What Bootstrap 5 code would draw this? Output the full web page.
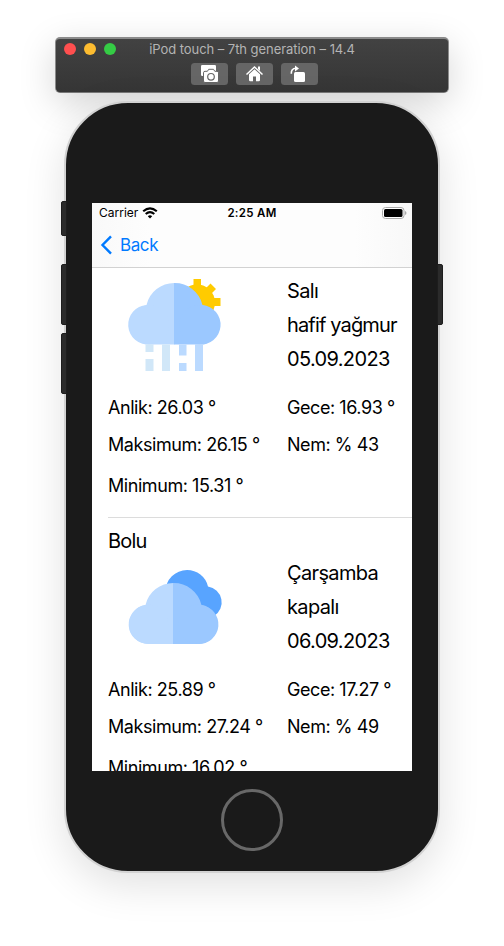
<!DOCTYPE html>
<html lang="tr">
<head>
<meta charset="utf-8">
<meta name="viewport" content="width=device-width, initial-scale=1">
<title>iPod touch – Simulator</title>
<link href="https://cdn.jsdelivr.net/npm/bootstrap@5.3.0/dist/css/bootstrap.min.css" rel="stylesheet">
<style>
body{font-family:Inter,"Liberation Sans",sans-serif;background:#fff;color:#000;height:946px;overflow:hidden}
.sim-bar{width:394px;height:56px;margin-top:37px;border:1px solid #8b8b8b;border-top-width:2px;border-bottom-color:#777;border-radius:5px;background:linear-gradient(#424242,#353535);box-shadow:0 10px 36px rgba(0,0,0,.17)}
.sim-title{font-size:13px;line-height:20px;color:#b4b4b4;text-align:center;letter-spacing:-.05px}
.lights{left:8px;top:4px}
.light{width:12px;height:12px;border-radius:50%}
.light-close{background:#ff4f4f}.light-min{background:#fdbc30}.light-max{background:#35cc45}
.tools{padding:4px 0 0 5px}
.tool{width:37px;height:22px;border-radius:3.5px;background:#666;border:0;padding:0;display:block}
.device{position:relative;width:376px;height:772px;margin-top:8px;padding:100px 26px 0;border:2px solid #d2d2d2;border-radius:64px;background:#1a1a1a;box-shadow:0 12px 42px rgba(0,0,0,.12)}
.side{position:absolute;width:6px;background:#2b2b2b;border:1px solid #1d1d1d;border-radius:2px 0 0 2px;left:-5px}
.side.right{left:auto;right:-5px;border-radius:0 2px 2px 0}
.s1{top:98px;height:35px}.s2{top:161px;height:61px}.s3{top:230px;height:61px}
.screen{width:320px;height:568px;background:#fff;overflow:hidden}
.top{height:65px;background:linear-gradient(90deg,#f9f9f9,#fdfdfd 18%,#fdfdfd 82%,#f8f8f8);border-bottom:1px solid #d2d2d2}
.status{position:relative;height:20px;font-size:12px;line-height:20px;padding:0 5px 0 7px}
.clock{position:absolute;left:0;right:0;text-align:center;font-size:11.5px;font-weight:600;letter-spacing:.3px}
.back{height:44px;padding-left:8px;color:#007aff;font-size:17px;letter-spacing:-.4px}
.back-label{padding:2px 0 0 2px}
.cell{padding-left:16px}
.cell + .cell .inner{border-top:1px solid #dcdcdc}
.city{font-size:20px;line-height:30px;padding-top:8px;letter-spacing:-.8px}
.first{padding-top:6px}
.art{width:179px}
.art svg{display:block;margin-left:12px}
.day{font-size:20px;line-height:34px;letter-spacing:-.65px;white-space:nowrap}
.day .wide{letter-spacing:-.85px}
.facts{padding-top:14px;font-size:18px;letter-spacing:-.44px;white-space:nowrap}
.facts .l{width:179px}
.r1{line-height:36px}.r2{line-height:38px}.r3{line-height:43px;padding-bottom:10px}
.home-btn{width:62px;height:62px;border:3px solid #686868;border-radius:50%;margin:18px auto 0}
</style>
<script src="https://cdn.jsdelivr.net/npm/bootstrap@5.3.0/dist/js/bootstrap.bundle.min.js"></script>
</head>
<body class="d-flex flex-column align-items-center">
<header class="sim-bar position-relative flex-shrink-0">
  <div class="lights position-absolute d-flex gap-2"><span class="light light-close"></span><span class="light light-min"></span><span class="light light-max"></span></div>
  <div class="sim-title">iPod touch – 7th generation – 14.4</div>
  <div class="d-flex justify-content-center gap-2 tools">
    <button class="tool" aria-label="Screenshot"><svg class="d-block" width="37" height="22" viewBox="0 0 37 22"><rect x="10" y="2" width="15" height="11" rx="1.3" fill="#fff"/><path d="M14 8.300h2.400l1.300-2h4.800l1.300 2H26q1.500 0 1.500 1.500V18q0 1.500-1.500 1.500H14q-1.500 0-1.500-1.500V9.800q0-1.500 1.500-1.500z" fill="#fff" stroke="#666" stroke-width="1"/><circle cx="20" cy="13.800" r="3.300" fill="#fff" stroke="#666" stroke-width="1.200"/></svg></button>
    <button class="tool" aria-label="Home"><svg class="d-block" width="37" height="22" viewBox="0 0 37 22"><path d="M10.500 11.500 18.500 4l8 7.500" fill="none" stroke="#fff" stroke-width="1.500"/><path d="M22 3.500h2V8l-2-2z" fill="#fff"/><path d="M13 11.300 18.500 6.200l5.500 5.100V17q0 1.300-1.300 1.300H20V13.500h-3v4.800h-2.700Q13 18.300 13 17z" fill="#fff"/></svg></button>
    <button class="tool" aria-label="Rotate"><svg class="d-block" width="37" height="22" viewBox="0 0 37 22"><rect x="13" y="9" width="11" height="10" rx="1.500" fill="#fff"/><path d="M10.300 10.800Q10 5.500 15 5.300" fill="none" stroke="#fff" stroke-width="1.600"/><path d="M14 2.500 18 5.500l-4 3z" fill="#fff"/></svg></button>
  </div>
</header>
<main class="device flex-shrink-0">
  <i class="side s1"></i><i class="side s2"></i><i class="side s3"></i><i class="side right s2"></i>
  <div class="screen">
    <div class="top">
      <div class="status d-flex align-items-center">
        <span>Carrier</span>
        <svg class="ms-1" width="16" height="12" viewBox="0 0 16 12" fill="none" stroke="#000"><path d="M1.200 4.300Q8-1.600 14.800 4.300" stroke-width="2.100"/><path d="M3.700 7Q8 3.300 12.300 7" stroke-width="2.100"/><path d="M5.800 9.200Q8 7.400 10.200 9.200L8 11.400z" fill="#000" stroke="none"/></svg>
        <span class="clock">2:25 AM</span>
        <svg class="ms-auto" width="25" height="12" viewBox="0 0 25 12"><rect x=".5" y=".5" width="21.500" height="11" rx="3" fill="#fff" stroke="#aaa"/><rect x="2" y="2" width="18.500" height="8" rx="1.500"/><path d="M23 4q1.500.6 1.500 2T23 8z" fill="#aaa"/></svg>
      </div>
      <div class="back d-flex align-items-center"><svg width="14" height="22" viewBox="0 0 14 22"><path d="M11 2.300 2.500 11l8.500 8.700" fill="none" stroke="#007aff" stroke-width="2.400"/></svg><span class="ms-1 back-label">Back</span></div>
    </div>
    <section class="cell"><div class="inner">
      <div class="d-flex first">
        <div class="art"><svg width="110" height="102" viewBox="120 274 110 102">
          <g fill="#ffcb00"><circle cx="197" cy="302.500" r="18"/><path d="M193.500 279h7.500v10h-7.500z"/><path d="M210.500 283.500l5.500 5.500-7 7-5.500-5.500zM211 298h9.500v8H211z"/></g>
          <path d="M174.500 283a28.500 28.500 0 0 0-28 22A19.800 19.800 0 0 0 149.500 344.500h25z" fill="#bbdaff"/><path d="M174 283a28.500 28.500 0 0 1 28.500 22A19.800 19.800 0 0 1 199 344.500h-25z" fill="#9bc8ff"/>
          <circle cx="149.300" cy="324.700" r="19.800" fill="#bbdaff"/><circle cx="199.200" cy="324.700" r="19.800" fill="#9bc8ff"/>
          <path d="M145.500 344.500h8v7.500h-8zM145.500 359h8v12h-8zM162 344.500h8V371h-8z" fill="#d1e7f8"/><path d="M179 344.500h7.500v11H179zM179 363h7.500v8H179zM195 344.500h8V371h-8z" fill="#bbdaff"/>
        </svg></div>
        <div class="day"><div>Salı</div><div class="wide">hafif yağmur</div><div>05.09.2023</div></div>
      </div>
      <div class="facts"><div class="r1 d-flex"><div class="l">Anlik: 26.03 °</div><div>Gece: 16.93 °</div></div><div class="r2 d-flex"><div class="l">Maksimum: 26.15 °</div><div>Nem: % 43</div></div><div class="r3">Minimum: 15.31 °</div></div>
    </div></section>
    <section class="cell"><div class="inner">
      <div class="city">Bolu</div>
      <div class="d-flex">
        <div class="art"><svg width="110" height="102" viewBox="120 556 110 102">
          <path d="M187 570a21.500 21.500 0 0 0-21.500 21.500L205 616h9A16 16 0 0 0 208 586.500 21.500 21.500 0 0 0 187 570z" fill="#58a4ff"/>
          <path d="M173.500 583a28.500 28.500 0 0 0-28 22A19.600 19.600 0 0 0 148.500 644h25z" fill="#bbdaff"/><path d="M173 583a28.500 28.500 0 0 1 28.500 22A19.600 19.600 0 0 1 198 644h-25z" fill="#9bc8ff"/>
          <circle cx="148.600" cy="624.400" r="19.600" fill="#bbdaff"/><circle cx="197.900" cy="624.400" r="19.600" fill="#9bc8ff"/>
        </svg></div>
        <div class="day"><div>Çarşamba</div><div>kapalı</div><div>06.09.2023</div></div>
      </div>
      <div class="facts"><div class="r1 d-flex"><div class="l">Anlik: 25.89 °</div><div>Gece: 17.27 °</div></div><div class="r2 d-flex"><div class="l">Maksimum: 27.24 °</div><div>Nem: % 49</div></div><div class="r3">Minimum: 16.02 °</div></div>
    </div></section>
  </div>
  <div class="home-btn"></div>
</main>
</body>
</html>
